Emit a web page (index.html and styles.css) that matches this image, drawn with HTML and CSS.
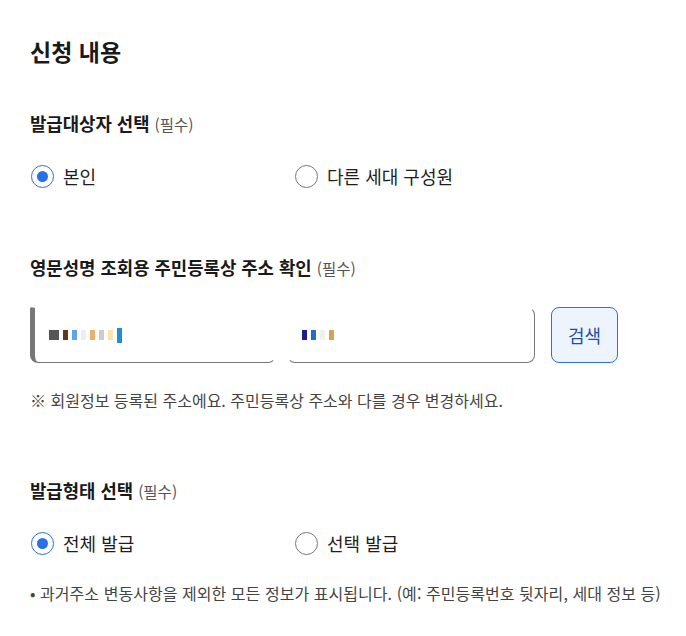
FILE: index.html
```html
<!DOCTYPE html>
<html lang="ko">
<head>
<meta charset="utf-8">
<link rel="stylesheet" href="styles.css">
</head>
<body>
<main class="page">
  <h2 class="title">신청 내용</h2>

  <section class="group first">
    <h3 class="label">발급대상자 선택 <span class="req">(필수)</span></h3>
    <div class="radios">
      <label class="radio"><span class="dot on"></span>본인</label>
      <label class="radio"><span class="dot"></span>다른 세대 구성원</label>
    </div>
  </section>

  <section class="group second">
    <h3 class="label">영문성명 조회용 주민등록상 주소 확인 <span class="req">(필수)</span></h3>
    <div class="addr">
      <div class="box box1">
        <span class="px" style="background:#555;width:10px"></span>
        <span class="px" style="background:#5b3a1e"></span>
        <span class="px" style="background:#5aa6e8"></span>
        <span class="px" style="background:#eee"></span>
        <span class="px" style="background:#e8b06a"></span>
        <span class="px" style="background:#ccc"></span>
        <span class="px" style="background:#fde2b0"></span>
        <span class="px tall" style="background:#1e8fd3"></span>
      </div>
      <div class="box box2">
        <span class="px" style="background:#1e1f8a"></span>
        <span class="px" style="background:#2173b8"></span>
        <span class="px" style="background:#f0f0f0"></span>
        <span class="px" style="background:#d9a050"></span>
      </div>
      <button class="search">검색</button>
    </div>
    <p class="note">※ 회원정보 등록된 주소에요. 주민등록상 주소와 다를 경우 변경하세요.</p>
  </section>

  <section class="group third">
    <h3 class="label">발급형태 선택 <span class="req">(필수)</span></h3>
    <div class="radios">
      <label class="radio"><span class="dot on"></span>전체 발급</label>
      <label class="radio"><span class="dot"></span>선택 발급</label>
    </div>
    <p class="bullet">• 과거주소 변동사항을 제외한 모든 정보가 표시됩니다. (예: 주민등록번호 뒷자리, 세대 정보 등)</p>
  </section>
</main>
</body>
</html>
```
FILE: styles.css
```css
* { box-sizing: border-box; }
body {
  margin: 0;
  background: #fff;
  font-family: "Noto Sans CJK KR", "Noto Sans", sans-serif;
  color: #1e1e1e;
}
.page { padding: 34px 30px 0 30px; }
.title {
  margin: 0;
  font-size: 23px;
  font-weight: 700;
  line-height: 34px;
  color: #1a1a1a;
}
.group { display: flex; flex-direction: column; }
.first { margin-top: 43px; }
.second { margin-top: 67px; }
.third { margin-top: 66px; }
.label {
  margin: 0;
  font-size: 17.8px;
  font-weight: 700;
  line-height: 24px;
  color: #1a1a1a;
}
.req { font-size: 15.5px; font-weight: 400; color: #555; }
.radios { display: flex; margin-top: 28px; }
.radio {
  display: flex;
  align-items: center;
  gap: 9px;
  font-size: 18px;
  line-height: 24px;
  color: #1e1e1e;
  width: 264px;
}
.dot {
  width: 23px; height: 23px;
  border: 1.5px solid #777;
  border-radius: 50%;
  flex: none;
  margin-left: 1px;
  display: flex; align-items: center; justify-content: center;
}
.dot.on { border-color: #2b6fe8; }
.dot.on::after {
  content: "";
  width: 11px; height: 11px;
  border-radius: 50%;
  background: #2b6fe8;
}
.addr { display: flex; margin-top: 27px; align-items: stretch; }
.box {
  height: 56px;
  border: 1px solid #777;
  border-top-color: #fff;
  border-radius: 8px;
  display: flex;
  align-items: center;
  padding-left: 14px;
}
.box1 {
  width: 246px;
  border-left: 5px solid #777;
  border-radius: 2px 8px 8px 8px;
  border-right-color: #fff;
}
.box2 { width: 248px; margin-left: 11px; border-left-color: #fff; }
.px { display: inline-block; width: 5px; height: 10px; margin-right: 4px; }
.px.tall { height: 15px; }
.search {
  margin-left: 16px;
  width: 67px;
  height: 56px;
  border: 1px solid #2b6fe8;
  border-radius: 8px;
  background: #eef4fe;
  color: #1d4fa8;
  font-family: inherit;
  font-size: 18px;
}
.note {
  margin: 25px 0 0;
  font-size: 16px;
  line-height: 24px;
  color: #444;
}
.bullet {
  margin: 26px 0 0;
  font-size: 16px;
  line-height: 24px;
  color: #444;
  letter-spacing: 0.05px;
  white-space: nowrap;
}
```
